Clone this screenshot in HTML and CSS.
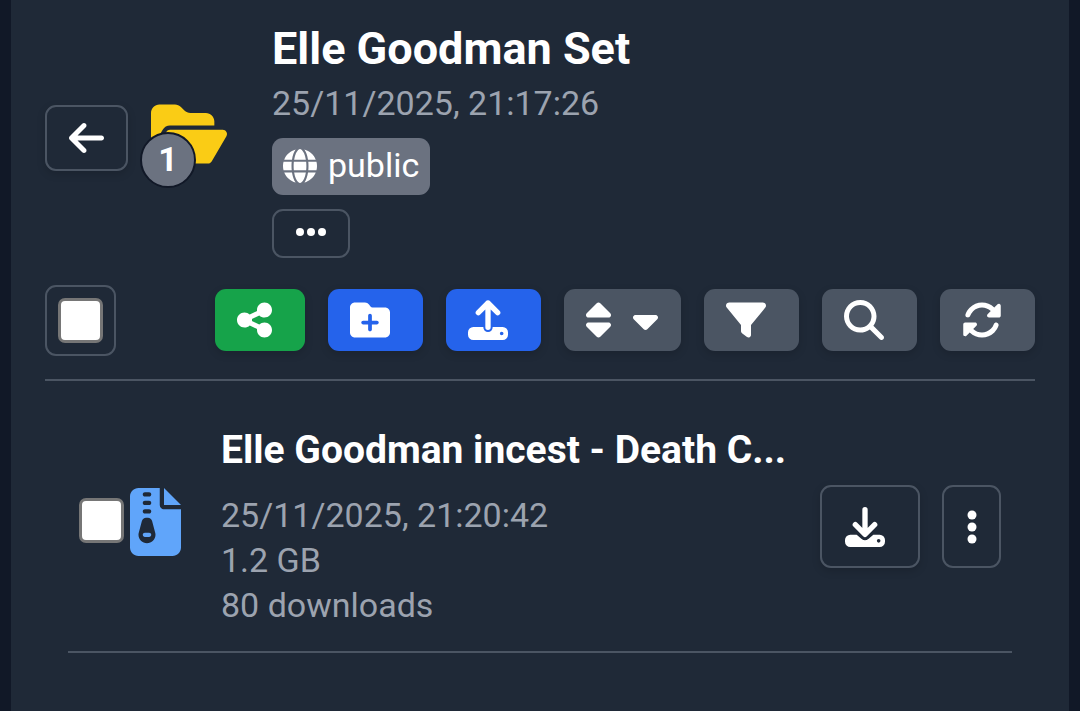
FILE: index.html
```html
<!DOCTYPE html>
<html lang="en">

<head>
  <meta charset="UTF-8" />
  <meta name="viewport" content="width=device-width, initial-scale=1.0" />
  <title>Elle Goodman Set</title>
  <link rel="stylesheet" href="styles.css">
</head>

<body>
  <main class="panel">
    <!-- folder header -->
    <header class="folder">
      <button type="button" class="btn btn-outline btn-back" aria-label="Back">
        <svg class="icon w35" viewBox="0 0 448 512"><path d="M9.4 233.4c-12.5 12.5-12.5 32.8 0 45.3l160 160c12.5 12.5 32.8 12.5 45.3 0s12.5-32.8 0-45.3L109.2 288 416 288c17.7 0 32-14.3 32-32s-14.3-32-32-32l-306.7 0L214.6 118.6c12.5-12.5 12.5-32.8 0-45.3s-32.8-12.5-45.3 0l-160 160z"/></svg>
      </button>
      <div class="folder-icon">
        <svg viewBox="0 0 576 512"><path d="M88.7 223.8L0 375.8V96C0 60.7 28.7 32 64 32H181.5c17 0 33.3 6.7 45.3 18.7l26.5 26.5c12 12 28.3 18.7 45.3 18.7H416c35.3 0 64 28.7 64 64v32H144c-22.8 0-43.8 12.1-55.3 31.8zm27.6 16.1C122.1 230 132.6 224 144 224H544c11.5 0 22 6.1 27.7 16.1s5.7 22.2-.1 32.1l-112 192C453.9 474 443.4 480 432 480H32c-11.5 0-22-6.1-27.7-16.1s-5.7-22.2 .1-32.1l112-192z"/></svg>
        <span class="count">1</span>
      </div>
      <div class="folder-info">
        <h1>Elle Goodman Set</h1>
        <p class="meta">25/11/2025, 21:17:26</p>
        <span class="tag">
          <svg viewBox="0 0 512 512"><path d="M352 256c0 22.2-1.2 43.6-3.3 64H163.3c-2.2-20.4-3.3-41.8-3.3-64s1.2-43.6 3.3-64H348.7c2.2 20.4 3.3 41.8 3.3 64zm28.8-64H503.9c5.3 20.5 8.1 41.9 8.1 64s-2.8 43.5-8.1 64H380.8c2.1-20.6 3.2-42 3.2-64s-1.1-43.4-3.2-64zm112.6-32H376.7c-10-63.9-29.8-117.4-55.3-151.6c78.3 20.7 142 77.5 171.9 151.6zm-149.1 0H167.7c6.1-36.4 15.5-68.6 27-94.7c10.5-23.6 22.2-40.7 33.5-51.5C239.4 3.2 248.7 0 256 0s16.6 3.2 27.8 13.8c11.3 10.8 23 27.9 33.5 51.5c11.6 26 20.9 58.2 27 94.7zm-209 0H18.6C48.6 85.9 112.2 29.1 190.6 8.4C165.1 42.6 145.3 96.1 135.3 160zM8.1 192H131.2c-2.1 20.6-3.2 42-3.2 64s1.1 43.4 3.2 64H8.1C2.8 299.5 0 278.1 0 256s2.8-43.5 8.1-64zM194.7 446.6c-11.6-26-20.9-58.2-27-94.6H344.3c-6.1 36.4-15.5 68.6-27 94.6c-10.5 23.6-22.2 40.7-33.5 51.5C272.6 508.8 263.3 512 256 512s-16.6-3.2-27.8-13.8c-11.3-10.8-23-27.9-33.5-51.5zM135.3 352c10 63.9 29.8 117.4 55.3 151.6C112.2 482.9 48.6 426.1 18.6 352H135.3zm358.1 0c-30 74.1-93.6 130.9-171.9 151.6c25.5-34.2 45.2-87.7 55.3-151.6H493.4z"/></svg>
          public
        </span>
        <button type="button" class="btn btn-outline btn-more" aria-label="More details">
          <svg viewBox="0 0 30 8"><circle cx="4" cy="4" r="4"/><circle cx="15" cy="4" r="4"/><circle cx="26" cy="4" r="4"/></svg>
        </button>
      </div>
    </header>

    <!-- toolbar -->
    <div class="toolbar">
      <label class="select-all"><input type="checkbox" class="check" aria-label="Select all"></label>
      <div class="tools">
        <button type="button" class="btn tool green" aria-label="Share">
          <svg class="icon w35" viewBox="0 0 448 512"><path d="M352 224c53 0 96-43 96-96s-43-96-96-96s-96 43-96 96c0 4 .2 8 .7 11.9l-94.1 47C145.4 170.2 121.9 160 96 160c-53 0-96 43-96 96s43 96 96 96c25.9 0 49.4-10.2 66.6-26.9l94.1 47c-.5 3.9-.7 7.8-.7 11.9c0 53 43 96 96 96s96-43 96-96s-43-96-96-96c-25.9 0-49.4 10.2-66.6 26.9l-94.1-47c.5-3.9 .7-7.8 .7-11.9s-.2-8-.7-11.9l94.1-47C302.6 213.8 326.1 224 352 224z"/></svg>
        </button>
        <button type="button" class="btn tool blue" aria-label="New folder">
          <svg class="icon w40" viewBox="0 0 512 512"><path d="M512 416c0 35.3-28.7 64-64 64H64c-35.3 0-64-28.7-64-64V96C0 60.7 28.7 32 64 32H192c20.1 0 39.1 9.5 51.2 25.6l19.2 25.6c6 8.1 15.5 12.8 25.6 12.8H448c35.3 0 64 28.7 64 64V416zM232 376c0 13.3 10.7 24 24 24s24-10.7 24-24V312h64c13.3 0 24-10.7 24-24s-10.7-24-24-24H280V200c0-13.3-10.7-24-24-24s-24 10.7-24 24v64H168c-13.3 0-24 10.7-24 24s10.7 24 24 24h64v64z"/></svg>
        </button>
        <button type="button" class="btn tool blue" aria-label="Upload">
          <svg class="icon w40" viewBox="0 0 120 120"><path class="line" d="M60 82V9M31 38L60 9l29 29"/><path fill-rule="evenodd" d="M16 81H46v1a14 14 0 0 0 28 0v-1h30a16 16 0 0 1 16 16v7a16 16 0 0 1-16 16H16a16 16 0 0 1-16-16v-7a16 16 0 0 1 16-16zM101 95a5.5 5.5 0 1 0 0 11 5.5 5.5 0 0 0 0-11z"/></svg>
        </button>
        <button type="button" class="btn tool gray" aria-label="Sort">
          <svg class="icon w25" viewBox="0 0 320 512"><path d="M137.4 41.4c12.5-12.5 32.8-12.5 45.3 0l128 128c9.2 9.2 11.9 22.9 6.9 34.9s-16.6 19.8-29.6 19.8H32c-12.9 0-24.6-7.8-29.6-19.8s-2.2-25.7 6.9-34.9l128-128zm0 429.3l-128-128c-9.2-9.2-11.9-22.9-6.9-34.9s16.6-19.8 29.6-19.8H288c12.9 0 24.6 7.8 29.6 19.8s2.2 25.7-6.9 34.9l-128 128c-12.5 12.5-32.8 12.5-45.3 0z"/></svg>
          <svg class="icon w25" viewBox="0 0 320 512"><path d="M137.4 374.6c12.5 12.5 32.8 12.5 45.3 0l128-128c9.2-9.2 11.9-22.9 6.9-34.9s-16.6-19.8-29.6-19.8L32 192c-12.9 0-24.6 7.8-29.6 19.8s-2.2 25.7 6.9 34.9l128 128z"/></svg>
        </button>
        <button type="button" class="btn tool gray" aria-label="Filter">
          <svg class="icon w40" viewBox="0 0 512 512"><path d="M3.9 54.9C10.5 40.9 24.5 32 40 32H472c15.5 0 29.5 8.9 36.1 22.9s4.6 30.5-5.2 42.5L320 320.9V448c0 12.1-6.8 23.2-17.7 28.6s-23.8 4.3-33.5-3l-64-48c-8.1-6-12.8-15.5-12.8-25.6V320.9L9 97.3C-.7 85.4-2.8 68.8 3.9 54.9z"/></svg>
        </button>
        <button type="button" class="btn tool gray" aria-label="Search">
          <svg class="icon w40" viewBox="0 0 512 512"><path d="M416 208c0 45.9-14.9 88.3-40 122.7L502.6 457.4c12.5 12.5 12.5 32.8 0 45.3s-32.8 12.5-45.3 0L330.7 376c-34.4 25.2-76.8 40-122.7 40C93.1 416 0 322.9 0 208S93.1 0 208 0S416 93.1 416 208zM208 352a144 144 0 1 0 0-288 144 144 0 1 0 0 288z"/></svg>
        </button>
        <button type="button" class="btn tool gray" aria-label="Refresh">
          <svg class="icon w40" viewBox="0 0 512 512"><path d="M142.9 142.9c62.2-62.2 162.7-62.5 225.3-1L327 183c-6.9 6.9-8.9 17.2-5.2 26.2s12.5 14.8 22.2 14.8H472c13.3 0 24-10.7 24-24V72c0-9.7-5.8-18.5-14.8-22.2s-19.3-1.7-26.2 5.2L413.4 96.6c-87.6-86.5-228.7-86.2-315.8 1C73.2 122 55.6 150.7 44.8 181.4c-5.9 16.7 2.9 34.9 19.5 40.8s34.9-2.9 40.8-19.5c7.7-21.8 20.2-42.3 37.8-59.8zM16 312V440c0 9.7 5.8 18.5 14.8 22.2s19.3 1.7 26.2-5.2l41.6-41.6c87.6 86.5 228.7 86.2 315.8-1c24.4-24.4 42.1-53.1 52.9-83.7c5.9-16.7-2.9-34.9-19.5-40.8s-34.9 2.9-40.8 19.5c-7.7 21.8-20.2 42.3-37.8 59.8c-62.2 62.2-162.7 62.5-225.3 1L185 329c6.9-6.9 8.9-17.2 5.2-26.2s-12.5-14.8-22.2-14.8H40c-13.3 0-24 10.7-24 24z"/></svg>
        </button>
      </div>
    </div>

    <!-- files -->
    <ul class="files">
      <li class="file">
        <div class="file-icon">
          <input type="checkbox" class="check" aria-label="Select file">
          <svg class="zip" viewBox="0 0 384 512"><path fill-rule="evenodd" d="M64 0C28.7 0 0 28.7 0 64V448c0 35.3 28.7 64 64 64H320c35.3 0 64-28.7 64-64V160H256c-17.7 0-32-14.3-32-32V0H64zM256 0V128H384L256 0zM96 48c0-8.8 7.2-16 16-16h32c8.8 0 16 7.2 16 16s-7.2 16-16 16H112c-8.8 0-16-7.2-16-16zm0 64c0-8.8 7.2-16 16-16h32c8.8 0 16 7.2 16 16s-7.2 16-16 16H112c-8.8 0-16-7.2-16-16zm0 64c0-8.8 7.2-16 16-16h32c8.8 0 16 7.2 16 16s-7.2 16-16 16H112c-8.8 0-16-7.2-16-16zm-6.3 71.8c3.7-14 16.4-23.8 30.9-23.8h14.8c14.5 0 27.2 9.7 30.9 23.8l23.5 88.2c1.4 5.4 2.1 10.9 2.1 16.4c0 35.2-28.8 63.7-64 63.7s-64-28.5-64-63.7c0-5.5 .7-11.1 2.1-16.4l23.5-88.2zM112 336c-8.8 0-16 7.2-16 16s7.2 16 16 16h32c8.8 0 16-7.2 16-16s-7.2-16-16-16H112z"/></svg>
        </div>
        <div class="file-info">
          <h2><a href="#">Elle Goodman incest - Death C...</a></h2>
          <p class="meta">25/11/2025, 21:20:42</p>
          <p class="meta">1.2 GB</p>
          <p class="meta">80 downloads</p>
        </div>
        <div class="actions">
          <button type="button" class="btn btn-outline btn-download" aria-label="Download">
            <svg class="icon w40" viewBox="0 0 120 120"><path class="line" d="M60 8v72M31 53l29 29 29-29"/><path fill-rule="evenodd" d="M16 83H35L50 96q10 8 20 0L85 83h19a16 16 0 0 1 16 16v5a16 16 0 0 1-16 16H16a16 16 0 0 1-16-16v-5a16 16 0 0 1 16-16zM101 96a5.5 5.5 0 1 0 0 11 5.5 5.5 0 0 0 0-11z"/></svg>
          </button>
          <button type="button" class="btn btn-outline btn-menu" aria-label="File menu">
            <svg viewBox="0 0 10 34"><circle cx="5" cy="5" r="4.5"/><circle cx="5" cy="17" r="4.5"/><circle cx="5" cy="29" r="4.5"/></svg>
          </button>
        </div>
      </li>
    </ul>
  </main>
</body>

</html>
```
FILE: styles.css
```css
* {
  box-sizing: border-box;
  margin: 0;
  padding: 0;
}

body {
  background: #111827;
  color: #fff;
  font-family: Roboto, "Liberation Sans", sans-serif;
  font-size: 34px;
  line-height: 45px;
}

svg {
  display: block;
  fill: currentColor;
}

.panel {
  min-height: 100vh;
  margin: 0 11px;
  padding: 21px 34px;
  background: #1f2937;
}

.meta {
  color: #9ca3af;
}

/* buttons */
.btn {
  display: flex;
  align-items: center;
  border: 0;
  border-radius: 11px;
  color: #fff;
  cursor: pointer;
  box-shadow: 0 3px 8px rgba(0, 0, 0, 0.15);
}

.btn-outline {
  justify-content: center;
  background: transparent;
  border: 2px solid #4b5563;
}

.icon {
  height: 40px;
}

.w25 {
  width: 25px;
}

.w35 {
  width: 35px;
}

.w40 {
  width: 40px;
}

.line {
  fill: none;
  stroke: currentColor;
  stroke-width: 16;
  stroke-linecap: round;
  stroke-linejoin: round;
}

.check {
  appearance: none;
  flex: none;
  width: 45px;
  height: 45px;
  background: #fff;
  border: 3px solid #767676;
  border-radius: 7px;
}

.check:checked {
  background: #2563eb;
}

/* folder header */
.folder {
  display: flex;
  align-items: center;
}

.btn-back {
  width: 83px;
  height: 66px;
  margin-bottom: 3px;
}

.folder-icon {
  position: relative;
  width: 76px;
  margin: 0 45px 11px 23px;
  color: #facc15;
}

.folder-icon svg {
  width: 76px;
  height: 68px;
}

.count {
  position: absolute;
  left: -11px;
  bottom: -20px;
  width: 56px;
  height: 56px;
  border: 2px solid #111827;
  border-radius: 50%;
  background: #6b7280;
  color: #fff;
  font-weight: 700;
  line-height: 51px;
  text-align: center;
}

.folder-info {
  display: flex;
  flex-direction: column;
  align-items: flex-start;
}

h1 {
  margin-bottom: 4px;
  font-size: 45px;
  font-weight: 700;
  line-height: 56px;
}

.tag {
  display: flex;
  align-items: center;
  gap: 11px;
  height: 57px;
  margin: 12px 0 14px;
  padding: 0 11px 2px;
  border-radius: 11px;
  background: #6b7280;
}

.tag svg {
  width: 34px;
  height: 34px;
}

.btn-more {
  width: 78px;
  height: 49px;
  padding-bottom: 4px;
  box-shadow: none;
}

.btn-more svg {
  width: 30px;
  height: 8px;
}

/* toolbar */
.toolbar {
  display: flex;
  align-items: center;
  justify-content: space-between;
  margin-top: 27px;
  padding-bottom: 23px;
  border-bottom: 2px solid #4b5563;
}

.select-all {
  padding: 11px;
  border: 2px solid #4b5563;
  border-radius: 11px;
}

.select-all .check {
  display: block;
}

.tools {
  display: flex;
  gap: 23px;
  padding-bottom: 2px;
}

.tool {
  gap: 22px;
  height: 62px;
  padding: 0 33px 0 22px;
}

.tool:has(.w25) {
  padding-right: 23px;
}

.green {
  background: #16a34a;
}

.blue {
  background: #2563eb;
}

.gray {
  background: #4b5563;
}

/* files */
.files {
  padding: 23px;
  list-style: none;
}

.file {
  display: flex;
  align-items: center;
  padding: 24px 11px 23px;
  border-bottom: 2px solid #4b5563;
}

.file-icon {
  display: flex;
  flex: none;
  gap: 6px;
  margin: 0 40px 13px 0;
}

.file-icon .check {
  margin-top: 10px;
}

.zip {
  width: 51px;
  height: 68px;
  color: #60a5fa;
}

.file-info {
  flex: 1;
  min-width: 0;
}

h2 {
  margin-bottom: 20px;
  overflow: hidden;
  font-size: 39px;
  font-weight: 700;
  white-space: nowrap;
  text-overflow: ellipsis;
}

h2 a {
  color: inherit;
  text-decoration: none;
}

.actions {
  display: flex;
  gap: 22px;
  margin: 0 0 3px 22px;
}

.btn-download,
.btn-menu {
  height: 83px;
}

.btn-download {
  width: 100px;
  padding-right: 11px;
}

.btn-menu {
  width: 59px;
  box-shadow: none;
}

.btn-menu svg {
  width: 10px;
  height: 34px;
}
```
